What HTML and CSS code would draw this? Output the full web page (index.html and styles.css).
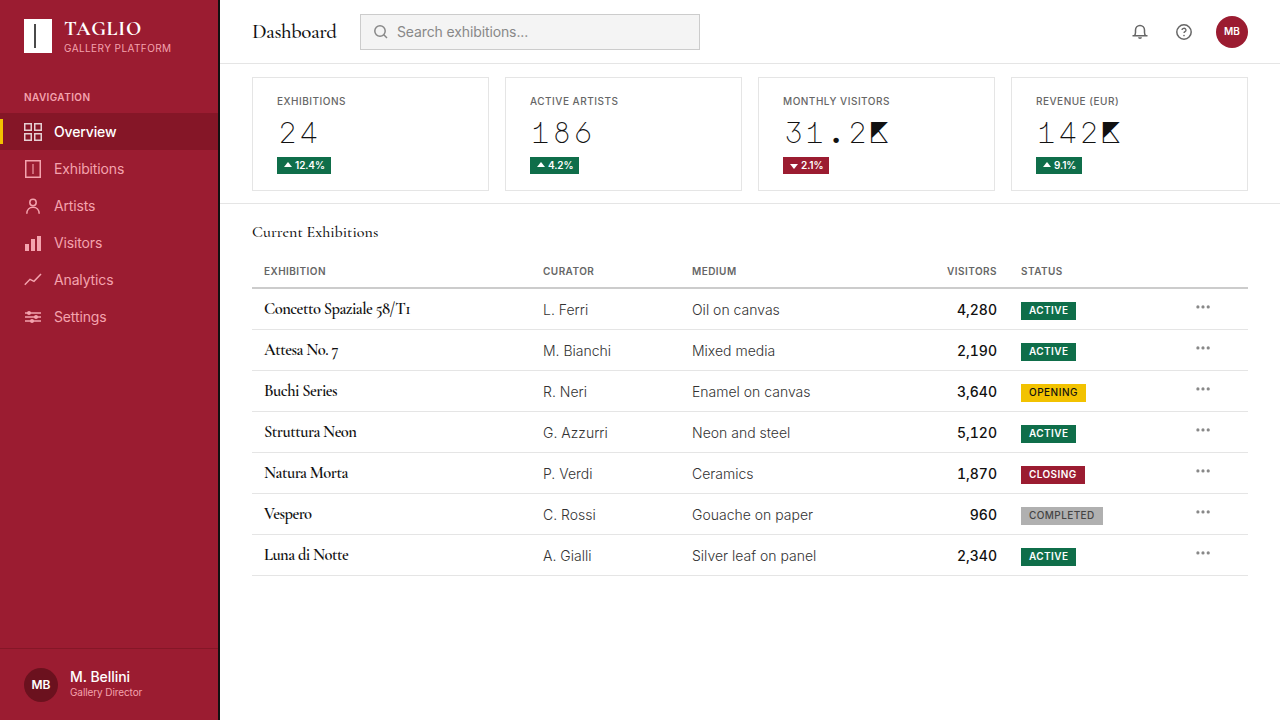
FILE: index.html
```html
<!DOCTYPE html>
<html lang="en">
<head>
    <meta charset="UTF-8">
    <title>Taglio Gallery Platform</title>
    <link rel="stylesheet" href="styles.css">
</head>
<body>
    <aside class="sidebar">
        <div class="brand">
            <div class="brand-mark"></div>
            <div>
                <div class="brand-name">TAGLIO</div>
                <div class="brand-sub">GALLERY PLATFORM</div>
            </div>
        </div>
        <div class="nav-label">NAVIGATION</div>
        <nav>
            <a class="nav-item active">
                <svg width="18" height="18" viewBox="0 0 18 18" fill="none" stroke="currentColor" stroke-width="1.5"><path d="M.75.75h6.5v6.5H.75zM10.75.75h6.5v6.5h-6.5zM.75 10.75h6.5v6.5H.75zM10.75 10.75h6.5v6.5h-6.5z"/></svg>
                <span>Overview</span>
            </a>
            <a class="nav-item">
                <svg width="18" height="18" viewBox="0 0 18 18" fill="none" stroke="currentColor"><path d="M1.75.75h14.5v16.5H1.75z" stroke-width="1.5"/><path d="M9 4v10" stroke-width="1.5" opacity=".75"/></svg>
                <span>Exhibitions</span>
            </a>
            <a class="nav-item">
                <svg width="18" height="18" viewBox="0 0 18 18" fill="none" stroke="currentColor" stroke-width="1.5"><circle cx="9" cy="5.5" r="3.2"/><path d="M2.8 16.8c0-4 2.6-6.6 6.2-6.6s6.2 2.6 6.2 6.6"/></svg>
                <span>Artists</span>
            </a>
            <a class="nav-item">
                <svg width="18" height="18" viewBox="0 0 18 18" fill="currentColor"><path d="M1 10h4v7H1zM7 5h4v12H7zM13 2h4v15h-4z"/></svg>
                <span>Visitors</span>
            </a>
            <a class="nav-item">
                <svg width="18" height="18" viewBox="0 0 18 18" fill="none" stroke="currentColor" stroke-width="1.5"><path d="M.8 13.8L6 8.3l4 2L17 3"/></svg>
                <span>Analytics</span>
            </a>
            <a class="nav-item">
                <svg width="18" height="18" viewBox="0 0 18 18" fill="currentColor"><path d="M1 4.3h16v1.5H1zM1 8.3h16v1.5H1zM1 12.3h16v1.5H1z"/><circle cx="5" cy="5" r="2"/><circle cx="12" cy="9" r="2"/><circle cx="8" cy="13" r="2"/></svg>
                <span>Settings</span>
            </a>
        </nav>
        <div class="user">
            <div class="user-avatar">MB</div>
            <div>
                <div class="user-name">M. Bellini</div>
                <div class="user-role">Gallery Director</div>
            </div>
        </div>
    </aside>

    <main class="main">
        <header class="topbar">
            <h1>Dashboard</h1>
            <div class="search">
                <svg width="16" height="16" viewBox="0 0 16 16" fill="none" stroke="currentColor" stroke-width="1.5"><circle cx="7" cy="7" r="5.2"/><path d="M10.800 10.800l3.200 3.200"/></svg>
                <span>Search exhibitions...</span>
            </div>
            <div class="actions">
                <svg width="18" height="18" viewBox="0 0 18 18" fill="none" stroke="currentColor" stroke-width="1.5"><path d="M1.500 12.800h15M3.200 12.800c1-.8 1.300-1.800 1.300-3.300V7a4.500 4.600 0 0 1 9 0v2.500c0 1.500.3 2.500 1.300 3.300"/><path d="M7 14.300h4a2 1.700 0 0 1-4 0z" fill="currentColor" stroke="none"/></svg>
                <svg width="18" height="18" viewBox="0 0 18 18" fill="none" stroke="currentColor" stroke-width="1.5"><circle cx="9" cy="9" r="7.200"/><path d="M7 7.100a2 1.800 0 1 1 3 1.500c-.7.4-1 .6-1 1.400" stroke-width="1.300"/><circle cx="9" cy="12.600" r=".8" fill="currentColor" stroke="none"/></svg>
                <div class="top-avatar">MB</div>
            </div>
        </header>

        <section class="stats">
            <div class="stat">
                <div class="stat-label">EXHIBITIONS</div>
                <div class="stat-value">24</div>
                <div class="delta"><i class="up"></i>12.4%</div>
            </div>
            <div class="stat">
                <div class="stat-label">ACTIVE ARTISTS</div>
                <div class="stat-value">186</div>
                <div class="delta"><i class="up"></i>4.2%</div>
            </div>
            <div class="stat">
                <div class="stat-label">MONTHLY VISITORS</div>
                <div class="stat-value">31.2K</div>
                <div class="delta negative"><i class="down"></i>2.1%</div>
            </div>
            <div class="stat">
                <div class="stat-label">REVENUE (EUR)</div>
                <div class="stat-value">142K</div>
                <div class="delta"><i class="up"></i>9.1%</div>
            </div>
        </section>

        <section class="exhibitions">
            <h2>Current Exhibitions</h2>
            <table>
                <colgroup>
                    <col class="c-title"><col class="c-curator"><col class="c-medium"><col class="c-visitors"><col class="c-status"><col>
                </colgroup>
                <thead>
                    <tr><th>EXHIBITION</th><th>CURATOR</th><th>MEDIUM</th><th class="num">VISITORS</th><th>STATUS</th><th></th></tr>
                </thead>
                <tbody>
                    <tr><td class="title">Concetto Spaziale 58/T1</td><td>L. Ferri</td><td>Oil on canvas</td><td class="num">4,280</td><td><span class="badge">ACTIVE</span></td><td class="more"><svg width="16" height="16" fill="#888"><circle cx="1.900" cy="7.900" r="1.600"/><circle cx="7" cy="7.900" r="1.600"/><circle cx="12.200" cy="7.900" r="1.600"/></svg></td></tr>
                    <tr><td class="title">Attesa No. 7</td><td>M. Bianchi</td><td>Mixed media</td><td class="num">2,190</td><td><span class="badge">ACTIVE</span></td><td class="more"><svg width="16" height="16" fill="#888"><circle cx="1.900" cy="7.900" r="1.600"/><circle cx="7" cy="7.900" r="1.600"/><circle cx="12.200" cy="7.900" r="1.600"/></svg></td></tr>
                    <tr><td class="title">Buchi Series</td><td>R. Neri</td><td>Enamel on canvas</td><td class="num">3,640</td><td><span class="badge opening">OPENING</span></td><td class="more"><svg width="16" height="16" fill="#888"><circle cx="1.900" cy="7.900" r="1.600"/><circle cx="7" cy="7.900" r="1.600"/><circle cx="12.200" cy="7.900" r="1.600"/></svg></td></tr>
                    <tr><td class="title">Struttura Neon</td><td>G. Azzurri</td><td>Neon and steel</td><td class="num">5,120</td><td><span class="badge">ACTIVE</span></td><td class="more"><svg width="16" height="16" fill="#888"><circle cx="1.900" cy="7.900" r="1.600"/><circle cx="7" cy="7.900" r="1.600"/><circle cx="12.200" cy="7.900" r="1.600"/></svg></td></tr>
                    <tr><td class="title">Natura Morta</td><td>P. Verdi</td><td>Ceramics</td><td class="num">1,870</td><td><span class="badge closing">CLOSING</span></td><td class="more"><svg width="16" height="16" fill="#888"><circle cx="1.900" cy="7.900" r="1.600"/><circle cx="7" cy="7.900" r="1.600"/><circle cx="12.200" cy="7.900" r="1.600"/></svg></td></tr>
                    <tr><td class="title">Vespero</td><td>C. Rossi</td><td>Gouache on paper</td><td class="num">960</td><td><span class="badge completed">COMPLETED</span></td><td class="more"><svg width="16" height="16" fill="#888"><circle cx="1.900" cy="7.900" r="1.600"/><circle cx="7" cy="7.900" r="1.600"/><circle cx="12.200" cy="7.900" r="1.600"/></svg></td></tr>
                    <tr><td class="title">Luna di Notte</td><td>A. Gialli</td><td>Silver leaf on panel</td><td class="num">2,340</td><td><span class="badge">ACTIVE</span></td><td class="more"><svg width="16" height="16" fill="#888"><circle cx="1.900" cy="7.900" r="1.600"/><circle cx="7" cy="7.900" r="1.600"/><circle cx="12.200" cy="7.900" r="1.600"/></svg></td></tr>
                </tbody>
            </table>
        </section>
    </main>
</body>
</html>
```
FILE: styles.css
```css
* {
    box-sizing: border-box;
}
body {
    margin: 0;
    height: 720px;
    display: flex;
    overflow: hidden;
    background: #fff;
    color: #111;
    font-family: Inter, sans-serif;
    font-size: 14px;
}
svg {
    display: block;
    flex: none;
}

/* sidebar */
.sidebar {
    width: 220px;
    flex: none;
    display: flex;
    flex-direction: column;
    background: #9b1c31;
    border-right: 2px solid #111;
    color: #f4a3ae;
}
.brand {
    display: flex;
    gap: 12px;
    padding: 19px 24px 0;
    height: 87px;
}
.brand-mark {
    width: 28px;
    height: 34px;
    padding: 5px 0 0 10px;
    background: #fff;
}
.brand-mark::before {
    content: "";
    display: block;
    width: 2px;
    height: 24px;
    background: #4a4a4a;
}
.brand-name {
    color: #fff;
    font-family: "Cormorant Garamond", "Liberation Serif", serif;
    font-size: 20px;
    font-weight: 700;
    letter-spacing: 0.8px;
    line-height: 20px;
}
.brand-sub {
    margin-top: 3px;
    font-size: 10px;
    line-height: 12px;
    letter-spacing: 0.42px;
    white-space: nowrap;
}
.nav-label {
    height: 26px;
    padding: 4px 24px 0;
    font-size: 10px;
    font-weight: 600;
    line-height: 12px;
    letter-spacing: 0.4px;
}
.nav-item {
    display: flex;
    align-items: center;
    gap: 12px;
    height: 37px;
    padding-left: 24px;
    letter-spacing: -0.14px;
}
.nav-item.active {
    background: linear-gradient(#f2c200, #f2c200) 0 6px / 3px 25px no-repeat #851627;
    color: #fff;
    font-weight: 500;
}
.active svg {
    opacity: 0.8;
}
.user {
    display: flex;
    align-items: center;
    gap: 12px;
    height: 72px;
    margin-top: auto;
    padding: 1px 24px 0;
    border-top: 1px solid #851627;
}
.user-avatar {
    width: 34px;
    height: 34px;
    border-radius: 50%;
    background: #6b111e;
    color: #fff;
    font-size: 12px;
    font-weight: 600;
    line-height: 34px;
    text-align: center;
}
.user-name {
    margin-top: -3px;
    color: #fff;
    font-weight: 500;
    line-height: 16px;
    letter-spacing: -0.05px;
}
.user-role {
    font-size: 10px;
    line-height: 14px;
    letter-spacing: -0.1px;
}

/* top bar */
.main {
    flex: 1;
    min-width: 0;
}
.topbar {
    display: flex;
    align-items: center;
    height: 64px;
    padding: 0 32px;
    border-bottom: 1px solid #e5e5e5;
}
h1, h2 {
    margin: 0;
    font-family: "Cormorant Garamond", "Liberation Serif", serif;
    font-weight: 500;
}
h1 {
    width: 108px;
    font-size: 21px;
    letter-spacing: -0.5px;
}
.search {
    display: flex;
    align-items: center;
    gap: 8px;
    width: 340px;
    height: 36px;
    padding-left: 12px;
    border: 1px solid #ccc;
    background: #f4f4f4;
    color: #888;
    letter-spacing: -0.12px;
}
.actions {
    display: flex;
    align-items: center;
    gap: 26px;
    margin-left: auto;
    color: #666;
}
.top-avatar {
    width: 32px;
    height: 32px;
    margin-left: -3px;
    border-radius: 50%;
    background: #9b1c31;
    color: #fff;
    font-size: 10px;
    font-weight: 600;
    line-height: 31px;
    text-align: center;
}

/* stats */
.stats {
    display: grid;
    grid-template-columns: repeat(4, 1fr);
    gap: 16px;
    height: 140px;
    padding: 13px 32px 12px;
    border-bottom: 1px solid #e5e5e5;
}
.stat {
    height: 114px;
    padding: 17px 24px;
    border: 1px solid #e5e5e5;
}
.stat-label {
    color: #666;
    font-size: 10px;
    font-weight: 500;
    line-height: 12px;
    letter-spacing: 0.5px;
}
.stat-value {
    height: 50px;
    padding-top: 7px;
    font-family: "Major Mono Display", "Liberation Mono", monospace;
    font-size: 30px;
    line-height: 34px;
    letter-spacing: -0.03em;
    text-indent: -0.5px;
}
.delta {
    display: inline-flex;
    align-items: center;
    height: 17px;
    padding: 0 6px 1px 7px;
    background: #0f6e4a;
    color: #fff;
    font-size: 10px;
    font-weight: 600;
    letter-spacing: -0.1px;
    vertical-align: top;
}
.delta.negative {
    background: #9b1c31;
}
.up, .down {
    margin-right: 3px;
    border: 4px solid transparent;
    border-top: 0;
    border-bottom: 5px solid #fff;
}
.up {
    margin-bottom: 1px;
}
.down {
    margin-top: 2px;
    border-top: 5px solid #fff;
    border-bottom: 0;
}

/* table */
.exhibitions {
    padding: 16px 32px;
}
h2 {
    height: 35px;
    font-size: 16px;
    line-height: 24px;
}
table {
    width: 100%;
    table-layout: fixed;
    border-collapse: separate;
    border-spacing: 0;
}
.c-title { width: 279px; }
.c-curator { width: 149px; }
.c-medium { width: 200px; }
.c-visitors { width: 129px; }
.c-status { width: 175px; }
th, td {
    padding: 0 12px;
    text-align: left;
}
th {
    height: 34px;
    border-bottom: 2px solid #ccc;
    color: #666;
    font-size: 10px;
    font-weight: 600;
    letter-spacing: 0.45px;
}
td {
    height: 41px;
    border-bottom: 1px solid #e5e5e5;
    color: #333;
    font-weight: 300;
    white-space: nowrap;
}
td.title {
    padding-bottom: 1px;
    color: #111;
    font-family: "Cormorant Garamond", "Liberation Serif", serif;
    font-size: 16.5px;
    font-weight: 600;
    letter-spacing: -0.54px;
}
.num {
    text-align: right;
}
td.num {
    color: #111;
    font-weight: 500;
    font-variant-numeric: tabular-nums;
}
.badge {
    display: inline-block;
    height: 18px;
    margin-top: 4px;
    padding: 0 8px;
    background: #0f6e4a;
    color: #fff;
    font-size: 10px;
    font-weight: 600;
    line-height: 17px;
    letter-spacing: 0.4px;
    vertical-align: top;
}
.opening {
    background: #f2c200;
    color: #111;
    font-weight: 500;
    letter-spacing: 0.5px;
}
.closing {
    background: #9b1c31;
}
.completed {
    background: #b0b0b0;
    color: #444;
    font-weight: 500;
    letter-spacing: 0.4px;
}
.more {
    padding-bottom: 4px;
}
```
